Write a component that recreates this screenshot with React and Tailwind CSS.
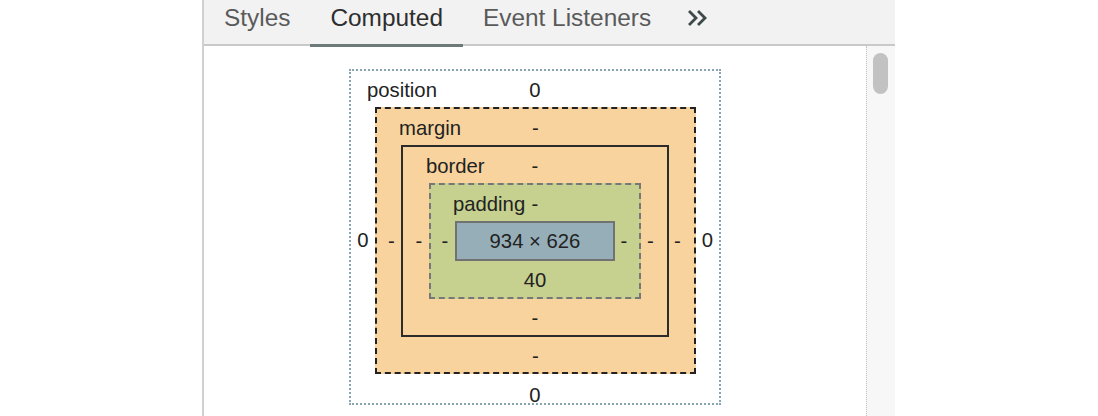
import React from "react";

function Chevrons() {
  return (
    <svg width="20" height="16" viewBox="0 0 20 16" fill="none" stroke="#3d4848" strokeWidth="2.8" strokeLinecap="square">
      <path d="M2 2 L8 8 L2 14" />
      <path d="M11 2 L17 8 L11 14" />
    </svg>
  );
}

export default function App() {
  return (
    <div className="w-[1098px] h-[416px] bg-white flex overflow-hidden font-['Liberation_Sans',Arial,sans-serif]">
      <div className="w-[202px] shrink-0" />
      <div className="w-[693px] shrink-0 border-l-2 border-[#d0d0d0] flex flex-col">
        {/* Tab bar */}
        <div className="relative z-10 h-[46px] shrink-0 bg-[#f2f2f2] border-b-2 border-[#c9c9c9] flex items-start text-[24.4px]">
          <div className="h-[44px] px-[20px] flex items-center pb-[8px] text-[#5a5a5a]">Styles</div>
          <div className="h-[47px] px-[20px] flex items-center pb-[8px] text-[#2e2e2e] border-b-[3px] border-[#6e7a7a]">Computed</div>
          <div className="h-[44px] px-[20px] flex items-center pb-[8px] text-[#5a5a5a]">Event Listeners</div>
          <div className="h-[44px] pl-[17px] flex items-center pb-[8px]">
            <Chevrons />
          </div>
        </div>
        {/* Body */}
        <div className="flex-1 flex">
          <div className="flex-1 flex justify-center pt-[23px] text-[20.3px] text-[#222]">
            {/* position */}
            <div className="w-[372px] h-[336px] border-2 border-dotted border-[#88a3b1] flex flex-col">
              <div className="h-[36px] shrink-0 grid grid-cols-[1fr_auto_1fr] items-center pt-[3px]">
                <span className="pl-[16px]">position</span>
                <span>0</span>
                <span />
              </div>
              <div className="flex items-center">
                <div className="w-[24px] text-center">0</div>
                {/* margin */}
                <div className="w-[321px] h-[267px] border-2 border-dashed border-[#222] bg-[#f8d39d] flex flex-col">
                  <div className="h-[36px] shrink-0 grid grid-cols-[1fr_auto_1fr] items-center pt-[3px]">
                    <span className="pl-[22px]">margin</span>
                    <span>-</span>
                    <span />
                  </div>
                  <div className="flex items-center">
                    <div className="w-[24px] text-center pl-[5px]">-</div>
                    {/* border */}
                    <div className="w-[268px] h-[192px] border-2 border-solid border-[#2b2b2b] flex flex-col">
                      <div className="h-[36px] shrink-0 grid grid-cols-[1fr_auto_1fr] items-center pt-[3px]">
                        <span className="pl-[23px]">border</span>
                        <span>-</span>
                        <span />
                      </div>
                      <div className="flex items-center">
                        <div className="w-[26px] text-center pl-[6px]">-</div>
                        {/* padding */}
                        <div className="w-[212px] h-[116px] border-2 border-dashed border-[#777] bg-[#c6d08f] flex flex-col">
                          <div className="h-[36px] shrink-0 grid grid-cols-[1fr_auto_1fr] items-center pt-[3px]">
                            <span className="pl-[22px] whitespace-nowrap">padding</span>
                            <span>-</span>
                            <span />
                          </div>
                          <div className="flex items-center">
                            <div className="w-[24px] text-center pl-[4px]">-</div>
                            {/* content */}
                            <div className="w-[160px] h-[40px] border-2 border-[#727272] bg-[#96aeb8] flex items-center justify-center">
                              934 × 626
                            </div>
                            <div className="w-[24px] text-center pr-[6px]">-</div>
                          </div>
                          <div className="flex-1 flex items-center justify-center pt-[3px]">40</div>
                        </div>
                        <div className="w-[26px] text-center pr-[7px]">-</div>
                      </div>
                      <div className="flex-1 flex items-center justify-center pt-[3px]">-</div>
                    </div>
                    <div className="w-[25px] text-center pr-[8px]">-</div>
                  </div>
                  <div className="flex-1 flex items-center justify-center pt-[3px]">-</div>
                </div>
                <div className="w-[23px] text-center">0</div>
              </div>
              <div className="flex-1 flex items-center justify-center pt-[6px]">0</div>
            </div>
          </div>
          {/* Scrollbar */}
          <div className="w-[29px] shrink-0 bg-[#f7f7f7] border-l border-dotted border-[#c4c4c4] pl-[6px] pt-[7px]">
            <div className="w-[15px] h-[41px] rounded-full bg-[#c2c2c2]" />
          </div>
        </div>
      </div>
    </div>
  );
}
